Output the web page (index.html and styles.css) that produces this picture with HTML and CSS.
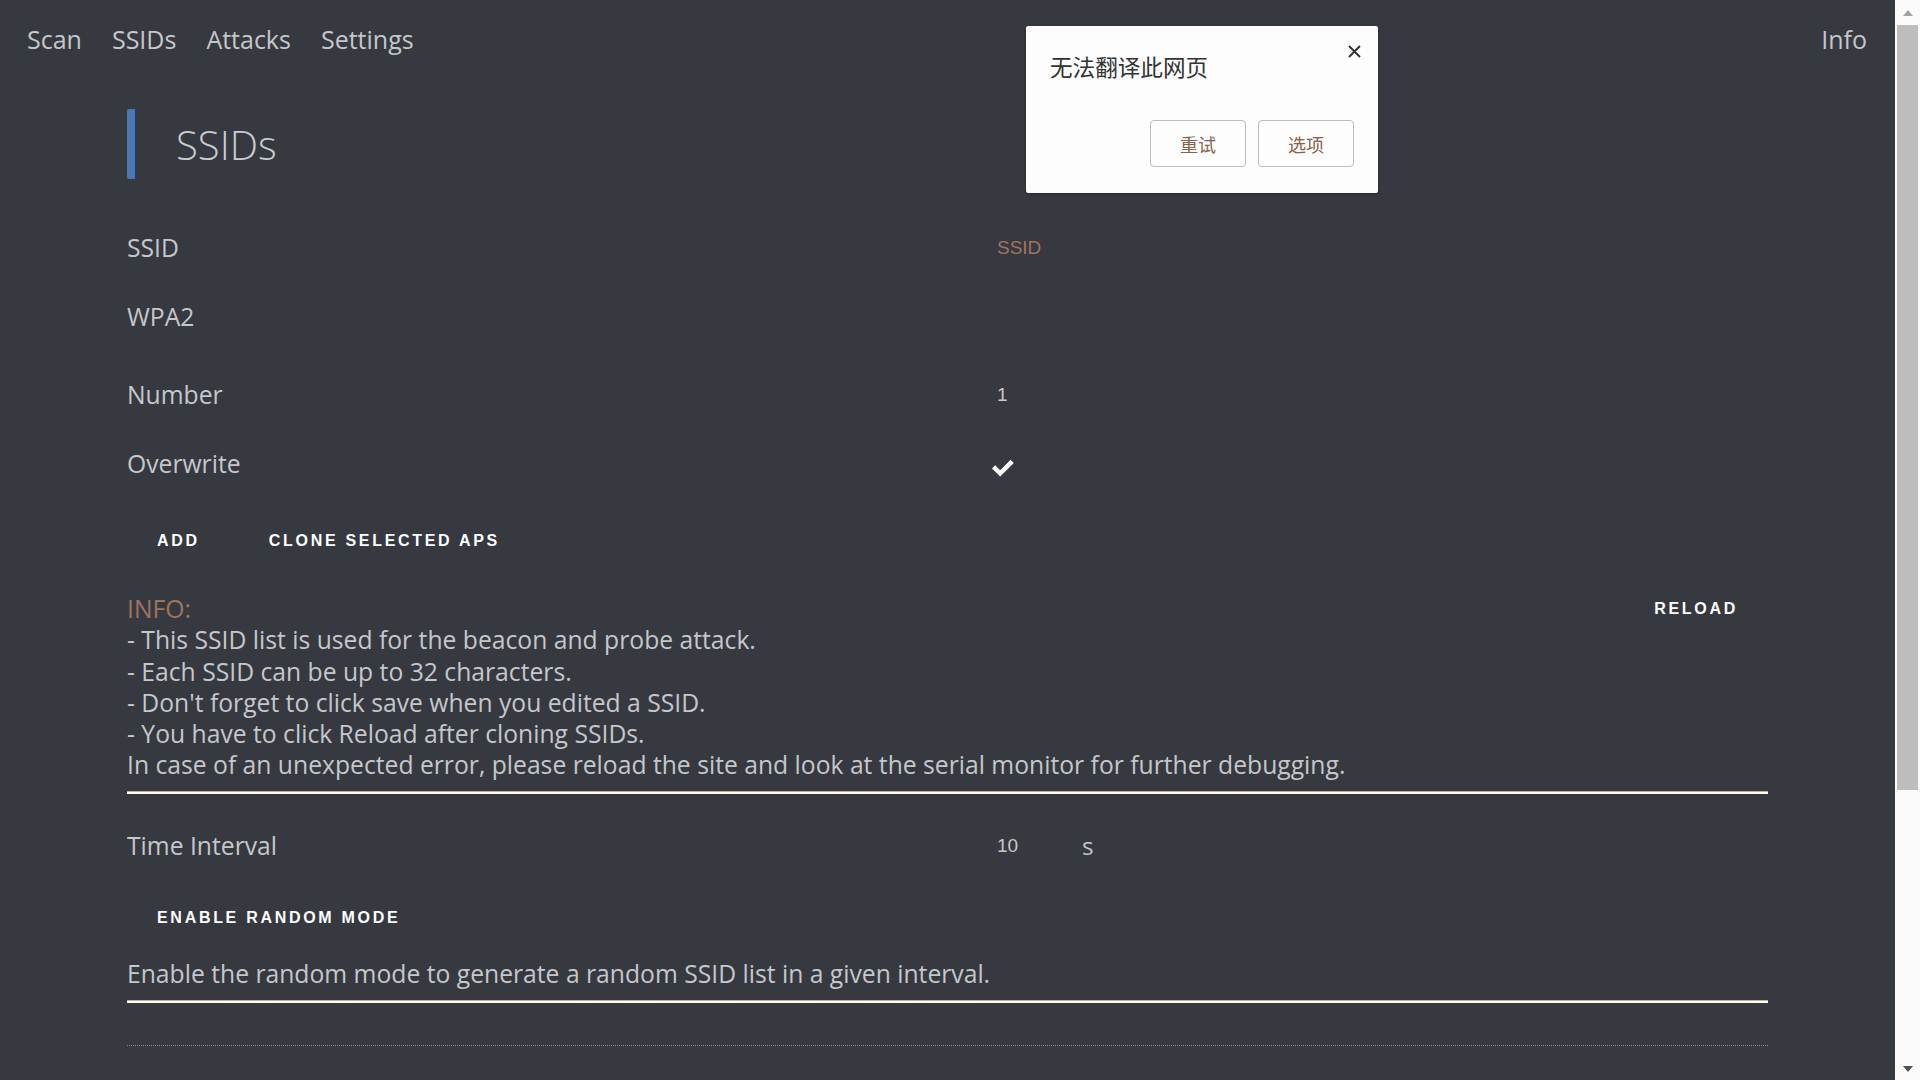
FILE: index.html
```html
<!DOCTYPE html>
<html lang="en">
<head>
  <meta charset="UTF-8" />
  <meta name="viewport" content="width=device-width, initial-scale=1.0"/>
  <title>SSIDs</title>
  <link rel="stylesheet" href="styles.css">
</head>
<body>

<div class="page">
  <nav class="topnav">
    <a href="#">Scan</a>
    <a href="#">SSIDs</a>
    <a href="#">Attacks</a>
    <a href="#">Settings</a>
    <a href="#" class="right">Info</a>
  </nav>

  <div class="container">
    <h1 class="header">SSIDs</h1>

    <div class="row">
      <label>SSID</label>
      <div class="field"><input type="text" placeholder="SSID"></div>
    </div>
    <div class="row row-gap">
      <label>WPA2</label>
      <div class="field"></div>
    </div>
    <div class="row">
      <label>Number</label>
      <div class="field"><input type="text" class="num" value="1"></div>
    </div>
    <div class="row">
      <label>Overwrite</label>
      <div class="field">
        <svg class="check" width="22" height="19" viewBox="0 0 22 19">
          <path d="M0 10.5 L3.2 7.3 L8.2 12.2 L18.6 1.8 L21.8 5 L8.2 18.5 Z" fill="#fff"/>
        </svg>
      </div>
    </div>

    <div class="btn-row">
      <button class="btn">add</button>
      <button class="btn">clone selected APs</button>
    </div>

    <div class="info-row">
      <p class="info">
        <span class="info-label">INFO:</span><br>
        - This SSID list is used for the beacon and probe attack.<br>
        - Each SSID can be up to 32 characters.<br>
        - Don't forget to click save when you edited a SSID.<br>
        - You have to click Reload after cloning SSIDs.<br>
        In case of an unexpected error, please reload the site and look at the serial monitor for further debugging.
      </p>
      <button class="btn btn-reload">reload</button>
    </div>
    <hr class="line">

    <div class="row">
      <label>Time Interval</label>
      <div class="field">
        <input type="text" class="num short" value="10"><span class="unit">s</span>
      </div>
    </div>
    <div class="btn-row btn-row-tight">
      <button class="btn">enable random mode</button>
    </div>
    <p class="desc">Enable the random mode to generate a random SSID list in a given interval.</p>
    <hr class="line">
    <hr class="dots">
    <div class="list"></div>
  </div>

  <!-- translate popup -->
  <div class="tr-popup">
    <span class="tr-close">
      <svg width="13" height="13" viewBox="0 0 13 13">
        <path d="M1 1 L12 12 M12 1 L1 12" stroke="#333" stroke-width="2"/>
      </svg>
    </span>
    <div class="tr-title">无法翻译此网页</div>
    <div class="tr-actions">
      <button class="tr-btn">重试</button>
      <button class="tr-btn">选项</button>
    </div>
  </div>
</div>

<div class="scrollbar">
  <div class="sb-btn"><span class="arrow-up"></span></div>
  <div class="sb-track"><div class="sb-thumb"></div></div>
  <div class="sb-btn"><span class="arrow-down"></span></div>
</div>

</body>
</html>
```

FILE: styles.css
```css
/* --- base --- */
:root {
  --bg: #36393f;
  --text: #c4c7cb;
  --brown: #a0735c;
  --blue: #4a78b4;
}
* {
  box-sizing: border-box;
  margin: 0;
  padding: 0;
}

body {
  font-family: 'Open Sans', 'Noto Sans', sans-serif;
  background: var(--bg);
  color: var(--text);
  display: flex;
  height: 100vh;
  overflow: hidden;
}

.page {
  flex: 1;
  position: relative;
  overflow: hidden;
}

/* --- nav --- */
.topnav {
  display: flex;
  align-items: center;
  height: 78px;
  padding: 0 13px 0 12px;
}
.topnav a {
  color: var(--text);
  text-decoration: none;
  font-size: 25px;
  padding: 0 15px;
}
.topnav a.right {
  margin-left: auto;
}

/* --- content --- */
.container {
  width: 1641px;
  margin: 0 auto;
}

.header {
  margin-top: 31px;
  margin-bottom: 34px;
  height: 70px;
  border-left: 8px solid var(--blue);
  border-radius: 2px;
  padding-left: 41px;
  display: flex;
  align-items: center;
  font-size: 40px;
  font-weight: 300;
  color: #c9ccd0;
}

.row {
  display: flex;
  align-items: center;
  height: 69px;
  font-size: 24.7px;
}
.row-gap {
  margin-bottom: 9px;
}
.row label {
  width: 870px;
}
.field {
  flex: 1;
  display: flex;
  align-items: center;
}

input {
  background: transparent;
  border: none;
  outline: none;
  font-family: 'Liberation Sans', Arial, sans-serif;
  font-size: 19px;
  color: #c8c8c8;
  width: 400px;
}
input::placeholder {
  color: var(--brown);
}
input.short {
  width: 70px;
  margin-top: 2px;
}
.unit {
  margin-left: 15px;
  font-size: 24.3px;
}

.check {
  margin-left: -5px;
  margin-top: 8px;
}

/* --- buttons --- */
.btn-row {
  display: flex;
  gap: 9px;
  margin-top: 20px;
}
.btn-row-tight {
  margin-top: 15px;
}
.btn {
  background: transparent;
  border: none;
  color: #fff;
  font-family: 'Liberation Sans', Arial, sans-serif;
  font-weight: bold;
  font-size: 16px;
  letter-spacing: 2.7px;
  text-transform: uppercase;
  height: 46px;
  padding: 0 30px;
  cursor: pointer;
}
.btn-reload {
  height: 32px;
  padding-right: 30px;
}

/* --- info --- */
.info-row {
  display: flex;
  justify-content: space-between;
  align-items: flex-start;
  margin-top: 29px;
}
.info {
  font-size: 24.7px;
  line-height: 31.3px;
}
.info-label {
  color: var(--brown);
}

.line {
  border: none;
  border-top: 1px solid #cbb08a;
  border-bottom: 2px solid #fdfdfd;
  margin-top: 10px;
}
.line + .row {
  margin-top: 17px;
}

.desc {
  font-size: 24.7px;
  line-height: 31.3px;
  margin-top: 17px;
}
.desc + .line {
  margin-top: 11px;
}

.dots {
  border: none;
  border-top: 1px dotted #8a8a8a;
  margin-top: 42px;
}
.list {
  height: 400px;
}

/* --- translate popup --- */
.tr-popup {
  position: absolute;
  left: 1026px;
  top: 26px;
  width: 352px;
  height: 167px;
  background: #fdfdfd;
  border-radius: 2px;
  box-shadow: 0 1px 3px rgba(0,0,0,0.35);
  padding: 26px 24px 26px;
  display: flex;
  flex-direction: column;
  font-family: 'Noto Sans CJK SC', sans-serif;
}
.tr-close {
  position: absolute;
  top: 19px;
  right: 17px;
  width: 13px;
  height: 13px;
  display: flex;
}
.tr-title {
  font-size: 22.6px;
  line-height: 30px;
  color: #333;
}
.tr-actions {
  margin-top: auto;
  display: flex;
  justify-content: flex-end;
  gap: 12px;
}
.tr-btn {
  width: 96px;
  height: 47px;
  background: #fdfdfd;
  border: 1px solid #bdbdbd;
  border-radius: 4px;
  font-family: 'Noto Sans CJK SC', sans-serif;
  font-size: 18px;
  color: #86604a;
}

/* --- fake scrollbar --- */
.scrollbar {
  width: 25px;
  background: #fbfbfb;
  display: flex;
  flex-direction: column;
}
.sb-btn {
  height: 24px;
  display: flex;
  align-items: center;
  justify-content: center;
}
.arrow-up {
  border-left: 5.5px solid transparent;
  border-right: 5.5px solid transparent;
  border-bottom: 6px solid #a3a3a3;
  margin-top: 2px;
}
.arrow-down {
  border-left: 5.5px solid transparent;
  border-right: 5.5px solid transparent;
  border-top: 6px solid #505050;
  margin-top: 2px;
}
.sb-track {
  flex: 1;
}
.sb-thumb {
  height: 765px;
  margin: 1px 2px 0;
  background: #bcbdbc;
}
```
